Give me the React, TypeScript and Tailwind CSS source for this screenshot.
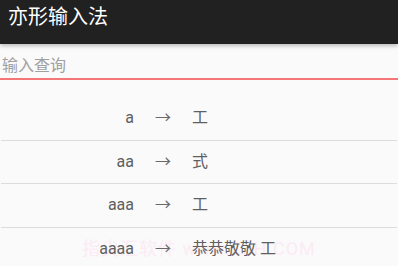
import React from "react";

const rows = [
  { k: "a", v: "工" },
  { k: "aa", v: "式" },
  { k: "aaa", v: "工" },
  { k: "aaaa", v: "恭恭敬敬 工" },
];

export default function App() {
  return (
    <div
      className="relative w-[398px] h-[266px] overflow-hidden bg-[#fafafa]"
      style={{ fontFamily: 'Roboto, "Noto Sans CJK SC", sans-serif' }}
    >
      <div className="absolute left-[82px] top-[237px] text-[18px] leading-[24px] text-[#fcebf4] pointer-events-none tracking-[1px] z-0">
        指尖汇软件 www.ZJH.COM
      </div>
      <div className="h-[44px] bg-[#212121] pl-[8px] pt-[3px] text-[20px] leading-[28px] text-white shadow-[0_2px_4px_rgba(0,0,0,0.25)] relative z-20">
        亦形输入法
      </div>
      <div className="pt-[11px] px-0 relative z-10">
        <div className="pl-[2px] text-[16px] leading-[22px] text-[#a0a0a0]">输入查询</div>
        <div className="mt-[1px] h-[2px] bg-[#f47676]" />
      </div>
      <div className="mt-[17px] relative z-10">
        {rows.map((r, i) => (
          <div
            key={i}
            className={`flex items-center h-[43.5px] mx-[1px] text-[16px] text-[#5f5f5f] ${
              i < rows.length - 1 ? "border-b border-[#dddddd]" : ""
            }`}
          >
            <div className="w-[133px] text-right">{r.k}</div>
            <div className="w-[58px] text-center text-[#6a6a6a]">→</div>
            <div>{r.v}</div>
          </div>
        ))}
      </div>
    </div>
  );
}
